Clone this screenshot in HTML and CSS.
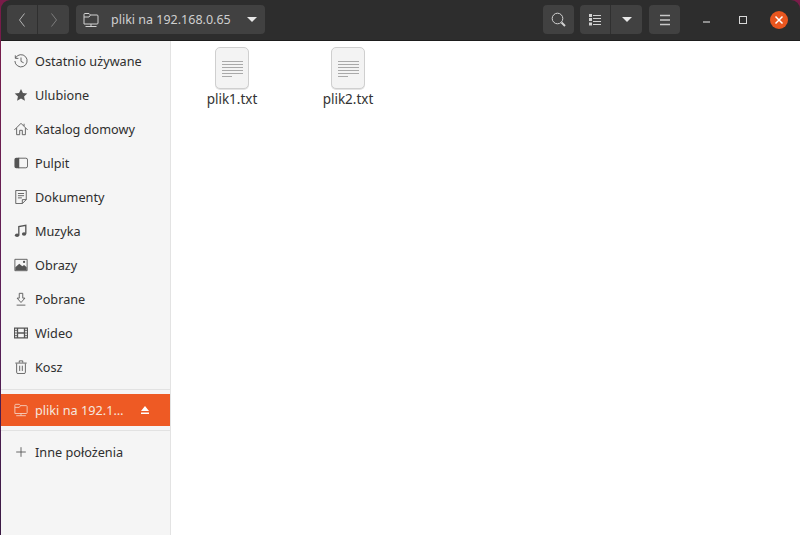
FILE: index.html
```html
<!DOCTYPE html>
<html lang="pl">
<head>
<meta charset="utf-8">
<title>pliki na 192.168.0.65</title>
<link rel="stylesheet" href="styles.css">
</head>
<body>
<div class="window">
  <header class="titlebar">
    <div class="btn-group nav-group">
      <button class="tb-btn nav-btn"><svg width="16" height="16" viewBox="0 0 16 16"><path d="M10.5 1.500 5.500 8l5 6.500" class="s-dim"/></svg></button>
      <button class="tb-btn nav-btn"><svg width="16" height="16" viewBox="0 0 16 16"><path d="M5.500 1.500 10.500 8l-5 6.500" class="s-dimmer"/></svg></button>
    </div>
    <div class="path-bar">
      <svg class="path-icon" width="16" height="16" viewBox="0 0 16 16"><path d="M1 12V2.500A1 1 0 0 1 2 1.500h4l1.500 1.500H14a1 1 0 0 1 1 1V11a1 1 0 0 1-1 1ZM1 5h5l1.500-2M8 12v2.500M2.500 14.500h11" class="s-light"/></svg>
      <span class="path-label">pliki na 192.168.0.65</span>
      <span class="caret"></span>
    </div>
    <div class="spacer"></div>
    <button class="tb-btn square"><svg width="15" height="15" viewBox="0 0 15 15"><circle cx="6.500" cy="6.500" r="5.300" class="s-light"/><path d="m10.500 10.500 3.500 3.500" class="s-thick"/></svg></button>
    <div class="btn-group view-group">
      <button class="tb-btn list-btn"><svg width="12" height="12" viewBox="0 0 12 12"><path d="M4 1.500h8M4 4.500h8M4 7.500h8M4 10.500h8" class="s-light"/><path d="M0 0h3v3H0zM0 4h3v3H0zM0 8.500h3v3H0z" class="f-light"/></svg></button>
      <button class="tb-btn caret-btn"><span class="caret"></span></button>
    </div>
    <button class="tb-btn square menu-btn"><svg width="14" height="14" viewBox="0 0 14 14"><path d="M2 2.500h10M2 7h10M2 11.500h10" class="s-menu"/></svg></button>
    <div class="win-controls">
      <span class="win-min"></span>
      <span class="win-max"></span>
      <span class="win-close"><svg width="10" height="10" viewBox="0 0 10 10"><path d="m1.500 1.500 7 7m0-7-7 7" class="s-white"/></svg></span>
    </div>
  </header>
  <div class="content">
    <nav class="sidebar">
      <ul class="places">
        <li class="place"><svg class="ico" viewBox="0 0 16 16"><path d="M1.800 4.500A7 7 0 1 1 1 8M1.500 1.500v3.500H5M8 4v4.500l3 1.500" class="s-gray"/></svg><span>Ostatnio używane</span></li>
        <li class="place"><svg class="ico" viewBox="0 0 16 16"><path d="m8 1 2.200 4.600 5 .6-3.700 3.400 1 5L8 12.100 3.500 14.600l1-5L.8 6.200l5-.6Z" class="f-gray"/></svg><span>Ulubione</span></li>
        <li class="place"><svg class="ico" viewBox="0 0 16 16"><path d="M.5 9 8 1.500 15.500 9M3 7v7.500h3.500V9.500h3v5H13V7M11.500 2v2.500" class="s-gray"/></svg><span>Katalog domowy</span></li>
        <li class="place"><svg class="ico" viewBox="0 0 16 16"><path d="M5 2.500h8.500a2 2 0 0 1 2 2v7a2 2 0 0 1-2 2H5" class="s-gray"/><path d="M2.500 2H6v12H2.500A2 2 0 0 1 .5 12V4a2 2 0 0 1 2-2Z" class="f-gray"/></svg><span>Pulpit</span></li>
        <li class="place"><svg class="ico" viewBox="0 0 16 16"><path d="M2 .5h12v10.500l-4.500 4.500H2ZM4.500 4h7M4.500 6.500h7M4.500 9h4.500" class="s-gray"/><path d="M9.500 15.500V11H14" class="s-gray"/></svg><span>Dokumenty</span></li>
        <li class="place"><svg class="ico" viewBox="0 0 16 16"><path d="M5.500 12.500V3l8-1.500V11" class="s-gray-thick"/><ellipse cx="3.500" cy="12.800" rx="2.500" ry="2" class="f-gray"/><ellipse cx="11.500" cy="11.300" rx="2.500" ry="2" class="f-gray"/></svg><span>Muzyka</span></li>
        <li class="place"><svg class="ico" viewBox="0 0 16 16"><path d="M1 1.500h14v13H1Z" class="s-gray"/><path d="M1.500 14v-3.500l4.500-4 3.500 3 2-1.500 3 2.500V14Z" class="f-gray"/><circle cx="11.500" cy="4.500" r="1.300" class="f-gray"/></svg><span>Obrazy</span></li>
        <li class="place"><svg class="ico" viewBox="0 0 16 16"><path d="M6 1.500h4V7h2.500L8 12 3.500 7H6ZM3 15h10" class="s-gray"/></svg><span>Pobrane</span></li>
        <li class="place"><svg class="ico" viewBox="0 0 16 16"><path d="M.5 2.500h15v11H.5ZM4 2.500v11M12 2.500v11M4 8h8" class="s-gray-thick"/><path d="M.5 5h3.500M.5 8h3.500M.5 11h3.500M12 5h3.500M12 8h3.500M12 11h3.500" class="s-gray"/></svg><span>Wideo</span></li>
        <li class="place"><svg class="ico" viewBox="0 0 16 16"><path d="M3 4v10a1.500 1.500 0 0 0 1.500 1.500h7A1.500 1.500 0 0 0 13 14V4M1.500 3.500h13M6 3V1h4v2M6.500 6.500v6M9.500 6.500v6" class="s-gray"/></svg><span>Kosz</span></li>
      </ul>
      <div class="rule"></div>
      <div class="place selected">
        <svg class="ico" viewBox="0 0 16 16"><path d="M1 12V2.500A1 1 0 0 1 2 1.500h4l1.500 1.500H14a1 1 0 0 1 1 1V11a1 1 0 0 1-1 1ZM1 5h5l1.500-2M8 12v2.500M2.500 14.500h11" class="s-pale"/></svg>
        <span class="sel-label">pliki na 192.1…</span>
        <svg class="eject" width="10" height="10" viewBox="0 0 10 10"><path d="M5 1 9 6H1ZM1 7.500h8V9H1Z" class="f-white"/></svg>
      </div>
      <div class="rule rule-lower"></div>
      <div class="place other"><svg class="ico" viewBox="0 0 16 16"><path d="M8 2.500v11M2.500 8h11" class="s-gray"/></svg><span>Inne położenia</span></div>
    </nav>
    <main class="files">
      <figure class="file">
        <div class="doc"><span class="ln"></span><span class="ln"></span><span class="ln"></span><span class="ln"></span><span class="ln"></span><span class="ln short"></span></div>
        <figcaption>plik1.txt</figcaption>
      </figure>
      <figure class="file">
        <div class="doc"><span class="ln"></span><span class="ln"></span><span class="ln"></span><span class="ln"></span><span class="ln"></span><span class="ln short"></span></div>
        <figcaption>plik2.txt</figcaption>
      </figure>
    </main>
  </div>
</div>
</body>
</html>
```
FILE: styles.css
```css
* { box-sizing: border-box; }
html, body { margin: 0; height: 100%; }
body {
  width: 800px;
  height: 535px;
  overflow: hidden;
  background: linear-gradient(180deg, #7a1c49 0%, #5a1f58 60%, #3a1a44 100%);
  font-family: "Noto Sans", "Open Sans", sans-serif;
  font-size: 12.700px;
}
.window {
  margin-left: 1px;
  width: 799px;
  height: 535px;
  display: flex;
  flex-direction: column;
  border-radius: 9px 9px 0 0;
  overflow: hidden;
}
.titlebar {
  height: 41px;
  flex: none;
  display: flex;
  align-items: center;
  background: #2d2d2d;
  border-bottom: 1px solid #1d1d1d;
  padding: 5px 12px 6px 6px;
  color: #dedede;
}
.btn-group { display: flex; }
.tb-btn {
  height: 29px;
  padding: 0;
  border: 0;
  background: #414141;
  display: flex;
  align-items: center;
  justify-content: center;
}
.nav-btn { width: 31px; }
.nav-btn:first-child { border-radius: 4px 0 0 4px; border-right: 1px solid #2f2f2f; }
.nav-btn:last-child { border-radius: 0 4px 4px 0; }
.path-bar {
  margin-left: 7px;
  width: 189px;
  height: 29px;
  background: #414141;
  border-radius: 4px;
  display: flex;
  align-items: center;
  padding: 0 8px 0 7px;
  font-size: 12.500px;
  color: #cfcfcf;
}
.path-icon { flex: none; }
.path-label { margin-left: 12px; flex: 1; white-space: nowrap; }
.caret {
  display: block;
  width: 0;
  height: 0;
  border-left: 5px solid transparent;
  border-right: 5px solid transparent;
  border-top: 5px solid #e8e8e8;
}
.spacer { flex: 1; }
.square { width: 31px; border-radius: 4px; }
.view-group { margin-left: 6px; }
.list-btn { width: 31px; border-radius: 4px 0 0 4px; border-right: 1px solid #303030; }
.caret-btn { width: 31px; border-radius: 0 4px 4px 0; }
.menu-btn { margin-left: 7px; }
.win-controls {
  display: flex;
  align-items: center;
  margin-left: 23px;
}
.win-min { width: 7px; height: 2px; background: #8f8f8f; margin-top: 4px; }
.win-max { width: 8px; height: 8px; margin-left: 29px; border: 1px solid #d8d8d8; }
.win-close {
  width: 18px;
  height: 18px;
  margin-left: 23px;
  border-radius: 50%;
  background: #e9561f;
  display: flex;
  align-items: center;
  justify-content: center;
}
.content { flex: 1; display: flex; min-height: 0; }
.sidebar {
  width: 170px;
  flex: none;
  background: #f5f5f5;
  border-right: 1px solid #e3e3e3;
  padding-top: 3px;
}
.places { list-style: none; margin: 0; padding: 0; }
.place {
  height: 34px;
  display: flex;
  align-items: center;
  padding-left: 13px;
  color: #2f2f2f;
  white-space: nowrap;
}
.ico { width: 14px; height: 14px; flex: none; margin-right: 7px; }
.rule { height: 1px; background: #e2e2e2; margin-top: 5px; }
.rule-lower { margin-top: 4px; }
.selected {
  height: 32px;
  margin-top: 4px;
  background: #ee5a24;
  color: #f5e6df;
}
.sel-label { flex: 1; }
.eject { margin-right: 20px; flex: none; }
.other { margin-top: 4px; color: #2f2f2f; }
.files {
  flex: 1;
  background: #fff;
  display: flex;
  align-items: flex-start;
  padding: 6px 0 0 28px;
}
.file {
  margin: 0;
  width: 66px;
  margin-right: 50px;
  display: flex;
  flex-direction: column;
  align-items: center;
}
.doc {
  width: 34px;
  height: 42px;
  border: 1px solid #cfcfcf;
  border-radius: 5px;
  background: #f3f3f3;
  box-shadow: 0 1px 0 #e4e4e4;
  padding: 13px 0 0 6px;
  display: flex;
  flex-direction: column;
  gap: 2px;
}
.ln { display: block; width: 21px; height: 1px; background: #a9a9a9; }
.ln.short { width: 10px; }
figcaption { margin-top: 2px; color: #333; font-size: 13.500px; line-height: 17px; }
.s-dim, .s-dimmer, .s-light, .s-thick, .s-white, .s-pale, .s-gray, .s-gray-thick, .s-menu { fill: none; }
.s-dim { stroke: #b5b5b5; stroke-width: 1; }
.s-dimmer { stroke: #7c7c7c; stroke-width: 1; }
.s-light { stroke: #d2d2d2; stroke-width: 1; }
.s-menu { stroke: #c8c8c8; stroke-width: 1.400; }
.s-thick { stroke: #d2d2d2; stroke-width: 2; }
.s-white { stroke: #fff; stroke-width: 1.500; }
.s-pale { stroke: #f6d2c2; stroke-width: 1; }
.s-gray { stroke: #555; stroke-width: 1; }
.s-gray-thick { stroke: #555; stroke-width: 1.500; }
.f-light { fill: #d2d2d2; }
.f-gray { fill: #555; }
.f-white { fill: #fff; }
```
